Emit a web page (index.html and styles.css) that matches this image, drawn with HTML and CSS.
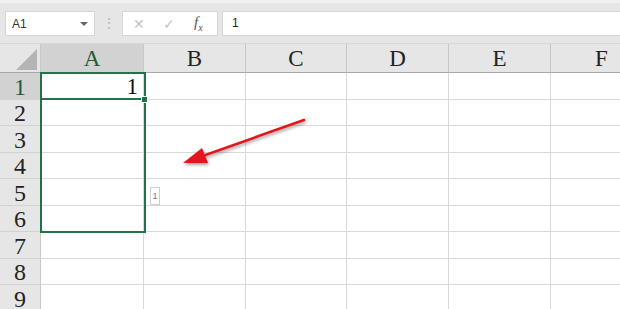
FILE: index.html
```html
<!DOCTYPE html>
<html lang="zh">
<head>
    <meta charset="UTF-8">
    <meta name="viewport" content="width=device-width, initial-scale=1.0">
    <title>Sheet1</title>
    <link rel="stylesheet" href="styles.css">
</head>
<body>

    <!-- formula bar -->
    <div class="toolbar">
        <div class="namebox">
            <span>A1</span>
            <span class="caret"></span>
        </div>
        <div class="grip">⋮</div>
        <div class="fxbox">
            <span class="btn">✕</span>
            <span class="btn">✓</span>
            <span class="fx"><i>f</i><sub>x</sub></span>
        </div>
        <div class="formula">1</div>
    </div>

    <div class="sheet">
        <table class="grid">
            <tr class="head">
                <th class="corner"><span class="tri"></span></th>
                <th class="w-a active">A</th>
                <th class="w-b">B</th>
                <th class="w-c">C</th>
                <th class="w-d">D</th>
                <th class="w-e">E</th>
                <th class="w-f">F</th>
            </tr>
            <tr class="r27"><th class="active">1</th><td class="num">1</td><td></td><td></td><td></td><td></td><td></td></tr>
            <tr class="r26"><th>2</th><td></td><td></td><td></td><td></td><td></td><td></td></tr>
            <tr class="r27"><th>3</th><td></td><td></td><td></td><td></td><td></td><td></td></tr>
            <tr class="r26"><th>4</th><td></td><td></td><td></td><td></td><td></td><td></td></tr>
            <tr class="r27"><th>5</th><td></td><td></td><td></td><td></td><td></td><td></td></tr>
            <tr class="r26"><th>6</th><td></td><td></td><td></td><td></td><td></td><td></td></tr>
            <tr class="r27"><th>7</th><td></td><td></td><td></td><td></td><td></td><td></td></tr>
            <tr class="r26"><th>8</th><td></td><td></td><td></td><td></td><td></td><td></td></tr>
            <tr class="r27"><th>9</th><td></td><td></td><td></td><td></td><td></td><td></td></tr>
        </table>

        <!-- selection A1:A6 -->
        <div class="selection"></div>
        <div class="active-line"></div>
        <div class="handle"></div>
        <div class="paste-tag">1</div>

        <!-- red arrow -->
        <svg class="arrow" width="140" height="60" viewBox="0 0 140 60">
            <defs>
                <filter id="sh" x="-20%" y="-20%" width="140%" height="160%">
                    <feDropShadow dx="1" dy="2" stdDeviation="1.5" flood-color="#000" flood-opacity="0.35"/>
                </filter>
            </defs>
            <g filter="url(#sh)">
                <line x1="127" y1="7" x2="20" y2="45" stroke="#e3161b" stroke-width="2.6" stroke-linecap="round"/>
                <polygon points="6,50 25,35 31,50" fill="#e3161b"/>
            </g>
        </svg>
    </div>

</body>
</html>
```

FILE: styles.css
```css
body {
    margin: 0;
    padding: 0;
    width: 620px;
    height: 309px;
    overflow: hidden;
    background-color: #e6e6e6;
    font-family: "Liberation Sans", Arial, sans-serif;
}

/* formula bar */
.toolbar {
    height: 44px;
    box-sizing: border-box;
    border-top: 3px solid #f1f1f1;
    border-bottom: 1px solid #d8d8d8;
    display: flex;
    align-items: flex-start;
    padding-top: 8px;
    padding-left: 5px;
}

.namebox {
    width: 90px;
    height: 25px;
    box-sizing: border-box;
    background-color: white;
    border: 1px solid #d6d6d6;
    display: flex;
    align-items: center;
    justify-content: space-between;
    padding: 0 6px 0 6px;
    font-size: 12px;
    color: #333;
}

.caret {
    width: 0;
    height: 0;
    border-left: 4px solid transparent;
    border-right: 4px solid transparent;
    border-top: 4px solid #666;
}

.grip {
    width: 27px;
    text-align: center;
    color: #b8b8b8;
    font-size: 14px;
    line-height: 25px;
}

.fxbox {
    width: 96px;
    height: 25px;
    box-sizing: border-box;
    background-color: white;
    border: 1px solid #d6d6d6;
    display: flex;
    align-items: center;
    padding-left: 10px;
}

.fxbox .btn {
    width: 30px;
    color: #c4c4c4;
    font-size: 14px;
}

.fx {
    font-family: "Liberation Serif", serif;
    font-size: 15px;
    color: #555;
    margin-left: 1px;
}

.fx sub {
    font-size: 10px;
    font-style: italic;
}

.formula {
    flex: 1;
    margin-left: 4px;
    height: 25px;
    box-sizing: border-box;
    background-color: white;
    border: 1px solid #d6d6d6;
    border-right: none;
    font-size: 12px;
    line-height: 23px;
    padding-left: 9px;
    color: #222;
}

/* sheet */
.sheet {
    position: relative;
    background-color: white;
}

.grid {
    border-collapse: separate;
    border-spacing: 0;
    table-layout: fixed;
    width: 653px;
    font-family: "Liberation Serif", "Times New Roman", serif;
}

.grid th,
.grid td {
    box-sizing: border-box;
    padding: 0;
    border-right: 1px solid #d9d9d9;
    border-bottom: 1px solid #d9d9d9;
}

/* row numbers */
.grid th:first-child {
    width: 41px;
    background-color: #e6e6e6;
    border-right: 1px solid #c8c8c8;
    border-bottom: 1px solid #d2d2d2;
    font-weight: normal;
    font-size: 24px;
    color: #222;
    text-align: center;
    line-height: 24px;
    vertical-align: bottom;
}

.grid th.active:first-child {
    background-color: #d2d2d2;
    color: #1f5c3a;
}

/* column letters */
.grid .head th {
    height: 29px;
    background-color: #e6e6e6;
    border-right: 1px solid #c8c8c8;
    border-bottom: 1px solid #a8a8a8;
    font-weight: normal;
    font-size: 23px;
    color: #222;
    text-align: center;
    vertical-align: bottom;
    line-height: 26px;
}

.grid .head th.active {
    background-color: #d2d2d2;
    color: #1f5c3a;
}

.corner {
    position: relative;
}

.tri {
    position: absolute;
    right: 3px;
    bottom: 2px;
    width: 0;
    height: 0;
    border-left: 21px solid transparent;
    border-bottom: 21px solid #b4b4b4;
}

.w-a { width: 103px; }
.w-b { width: 102px; }
.w-c { width: 101px; }
.w-d { width: 102px; }
.w-e { width: 102px; }
.w-f { width: 102px; }

.r27 { height: 27px; }
.r26 { height: 26px; }

.grid td.num {
    text-align: right;
    font-size: 23px;
    line-height: 24px;
    vertical-align: bottom;
    padding-right: 5px;
    color: #111;
}

/* overlays, offsets are from the top of the sheet */
.selection {
    position: absolute;
    left: 40px;
    top: 28px;
    width: 106px;
    height: 161px;
    box-sizing: border-box;
    border: 2px solid #217346;
}

.active-line {
    position: absolute;
    left: 40px;
    top: 54px;
    width: 106px;
    height: 2px;
    background-color: #217346;
}

.handle {
    position: absolute;
    left: 141px;
    top: 52px;
    width: 5px;
    height: 5px;
    background-color: #217346;
    border: 1px solid white;
}

.paste-tag {
    position: absolute;
    left: 150px;
    top: 143px;
    width: 10px;
    height: 18px;
    box-sizing: border-box;
    border: 1px solid #cfcfcf;
    background-color: white;
    font-size: 9px;
    color: #777;
    text-align: center;
    line-height: 16px;
}

.arrow {
    position: absolute;
    left: 177px;
    top: 69px;
}
```
